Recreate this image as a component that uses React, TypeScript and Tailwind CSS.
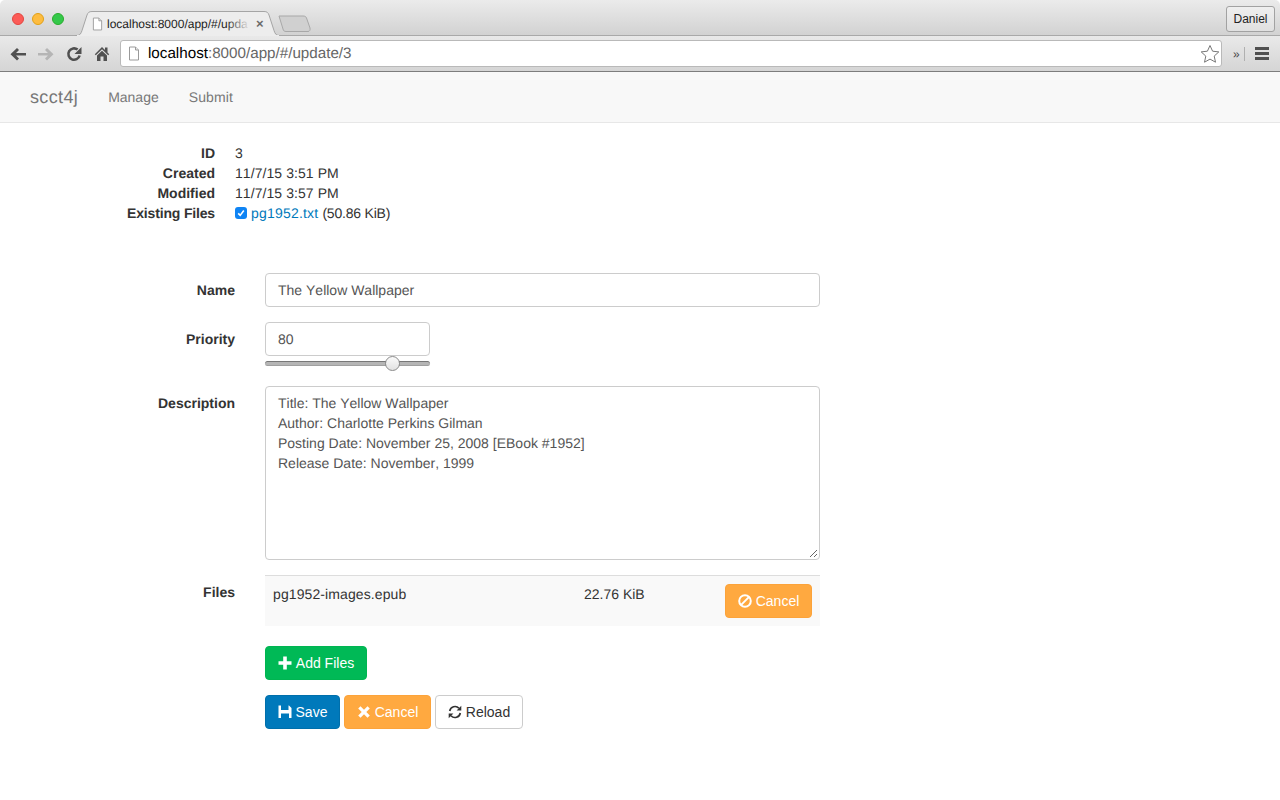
import React from "react";

const FileGlyph = ({ className }: { className: string }) => (
  <svg viewBox="0 0 12 14" className={className} fill="#fff" stroke="#9a9a9a" strokeWidth="1">
    <path d="M1.5.5h6l3 3v10h-9z" />
    <path d="M7.5.5v3h3" fill="#e8e8e8" />
  </svg>
);

const Reload = ({ className }: { className: string }) => (
  <svg viewBox="0 0 16 16" className={className} fill="none" stroke="currentColor">
    <path d="M13.6 9.5A5.7 5.7 0 1 1 11.6 3.6" strokeWidth="2.6" />
    <path d="M15.5 1v7H8.500z" fill="currentColor" stroke="none" />
  </svg>
);

const Home = ({ className }: { className: string }) => (
  <svg viewBox="0 0 16 16" className={className} fill="currentColor">
    <path d="M8 1L.8 8.200l1 1L8 3.200l6.200 6 1-1L13.500 6.500V1.500h-2.500v2.500z" />
    <path d="M8 4.700L3 9.500V15h3.500v-4.500h3V15H13V9.500z" />
  </svg>
);

const Sync = ({ className }: { className: string }) => (
  <svg viewBox="0 0 14 14" className={className} fill="none" stroke="currentColor">
    <path d="M1.700 6A5.400 5.400 0 0 1 11 3.300" strokeWidth="1.700" />
    <path d="M12.300 8A5.400 5.400 0 0 1 3 10.700" strokeWidth="1.700" />
    <path d="M13.300 .8v4.700H8.600z M.7 13.200V8.500h4.700z" fill="currentColor" stroke="none" />
  </svg>
);

const Ban = ({ className }: { className: string }) => (
  <svg viewBox="0 0 14 14" className={className} fill="none" stroke="currentColor" strokeWidth="2">
    <circle cx="7" cy="7" r="5.800" />
    <path d="M2.900 11.100l8.200-8.200" />
  </svg>
);

const Plus = ({ className }: { className: string }) => (
  <svg viewBox="0 0 14 14" className={className} fill="currentColor">
    <path d="M5.200 .5h3.600v4.700h4.700v3.600H8.800v4.700H5.200V8.800H.5V5.200h4.700z" />
  </svg>
);

const Remove = ({ className }: { className: string }) => (
  <svg viewBox="0 0 14 14" className={className} fill="currentColor">
    <path d="M3.500 1.200L7 4.700l3.500-3.500 2.300 2.300-3.500 3.500 3.500 3.500-2.300 2.300L7 9.300l-3.500 3.500-2.300-2.300 3.500-3.500-3.500-3.500z" />
  </svg>
);

const Floppy = ({ className }: { className: string }) => (
  <svg viewBox="0 0 14 14" className={className} fill="currentColor">
    <path d="M.5 .5H3v4.500h7.500V.5h.5l2.500 2.500V13H11V8.500H3V13H.5z" />
  </svg>
);

function BrowserChrome() {
  return (
    <div className="border-b border-[#7d7d7d]">
      <div className="h-9 flex items-end bg-gradient-to-b from-[#ebebeb] to-[#d2d2d2] border-b border-[#a9a9a9] rounded-t-[5px] pl-3 pr-[5px]">
        <div className="flex gap-2 self-start mt-[13px]">
          <span className="w-3 h-3 rounded-full bg-[#fc5b57] border border-[#e2463f]" />
          <span className="w-3 h-3 rounded-full bg-[#fdbc40] border border-[#e1a116]" />
          <span className="w-3 h-3 rounded-full bg-[#34c84a] border border-[#2aac2c]" />
        </div>
        <div className="relative w-[206px] h-[25px] ml-[11px] -mb-px flex items-center pl-[17px] text-[12px] text-[#222]">
          <svg viewBox="0 0 206 25" className="absolute left-0 top-0 w-[206px] h-[25px]">
            <path d="M0 24.500h2c3 0 4-2 5-5L12 4c1-2.500 2-3.500 5-3.500h172c3 0 4 1 5 3.500l5 15.500c1 3 2 5 5 5" fill="#ededed" stroke="#a5a5a5" />
            <path d="M2 24.500h202" stroke="#ededed" />
          </svg>
          <FileGlyph className="relative w-[11px] h-[14px] shrink-0 mr-[4px]" />
          <span className="relative w-[143px] shrink-0 whitespace-nowrap">
            localhost:8000/app/#/upda
            <span className="absolute right-0 top-0 h-full w-[24px] bg-gradient-to-r from-transparent to-[#ededed]" />
          </span>
          <span className="relative ml-[6px] text-[#6a6a6a] text-[13px] leading-none font-bold">×</span>
        </div>
        <svg viewBox="0 0 34 17" className="w-[34px] h-[17px] -ml-[3px] mb-[3px]">
          <path d="M1 1h24c2 0 3 .6 3.500 2l3.500 10c.5 2-.5 3.500-2 3.500H8c-2 0-2.600-1-3-2.500L1 1z" fill="#d0d0d0" stroke="#a8a8a8" />
        </svg>
        <button className="ml-auto self-start mt-[6px] w-[49px] h-[26px] rounded-[3px] border border-[#a2a2a2] bg-gradient-to-b from-[#efefef] to-[#e0e0e0] text-[12px] text-[#222] text-center">
          Daniel
        </button>
      </div>
      <div className="h-[35px] flex items-center bg-gradient-to-b from-[#e9e9e9] to-[#d5d5d5] pl-[10px]">
        <svg viewBox="0 0 16 14" className="w-[16px] h-[14px] text-[#505050]" fill="currentColor">
          <path d="M7 1l2 2-3 3h10v2.500H6l3 3-2 2L.5 7.200z" />
        </svg>
        <svg viewBox="0 0 16 14" className="w-[16px] h-[14px] ml-[12px] text-[#b5b5b5]" fill="currentColor">
          <path d="M9 1L7 3l3 3H0v2.500h10l-3 3 2 2 6.500-6.300z" />
        </svg>
        <Reload className="w-[16px] h-[16px] ml-[12px] text-[#505050]" />
        <Home className="w-[16px] h-[16px] ml-[12px] text-[#505050]" />
        <div className="ml-[10px] w-[1102px] h-[27px] flex items-center rounded-[3px] border border-[#b9b9b9] bg-white pl-[7px] pr-[1px] text-[15.2px] text-[#666]">
          <FileGlyph className="w-[12px] h-[15px] mr-[8px] shrink-0" />
          <span className="text-black">localhost</span>:8000/app/#/update/3
          <svg viewBox="0 0 20 19" className="ml-auto w-[20px] h-[19px]" fill="#fff" stroke="#777">
            <path d="M10 1.500l2.600 5.700 6.200.7-4.600 4.200 1.300 6.100-5.500-3.100-5.500 3.100 1.300-6.100L1.200 7.900l6.200-.7z" />
          </svg>
        </div>
        <span className="ml-[11px] text-[12px] leading-none text-[#444]">»</span>
        <span className="ml-[4px] w-px h-[14px] bg-[#b0b0b0]" />
        <div className="ml-[10px] flex flex-col gap-[2px]">
          <span className="w-[14px] h-[3px] bg-[#505050]" />
          <span className="w-[14px] h-[3px] bg-[#505050]" />
          <span className="w-[14px] h-[3px] bg-[#505050]" />
        </div>
      </div>
    </div>
  );
}

const fieldClass =
  "block w-full rounded border border-[#ccc] bg-white px-3 text-[14px] text-[#555] leading-5";

const btnClass =
  "h-[34px] inline-flex items-center justify-center rounded border text-[14px] font-normal";

function Row({ label, children, className }: { label: string; children: React.ReactNode; className?: string }) {
  return (
    <div className={`flex ${className ?? ""}`}>
      <label className="w-[235px] shrink-0 pt-[7px] text-right font-bold leading-5 text-[#333]">{label}</label>
      <div className="ml-[30px] w-[555px]">{children}</div>
    </div>
  );
}

const details = [
  ["ID", "3"],
  ["Created", "11/7/15 3:51 PM"],
  ["Modified", "11/7/15 3:57 PM"],
];

export default function App() {
  return (
    <div className="h-[800px] overflow-hidden bg-white font-['Liberation_Sans',sans-serif] [font-kerning:none] [text-rendering:geometricPrecision] text-[14px] leading-5 text-[#333]">
      <BrowserChrome />
      <nav className="h-[51px] flex items-center bg-[#f8f8f8] border-b border-[#e7e7e7] pl-[30px] text-[#777]">
        <span className="text-[18px] tracking-[0.35px] mr-[30px]">scct4j</span>
        <span className="mr-[30px]">Manage</span>
        <span className="tracking-[0.1px]">Submit</span>
      </nav>

      <dl className="mt-5">
        {details.map(([k, v]) => (
          <div key={k} className="flex h-5">
            <dt className="w-[215px] text-right font-bold">{k}</dt>
            <dd className="ml-5 tracking-[0.07px]">{v}</dd>
          </div>
        ))}
        <div className="flex h-5">
          <dt className="w-[215px] text-right font-bold tracking-[-0.16px]">Existing Files</dt>
          <dd className="ml-5 flex items-center">
            <span className="w-3 h-3 rounded-[3px] bg-[#0f84f4] flex items-center justify-center mr-1">
              <svg viewBox="0 0 10 10" className="w-2 h-2" fill="none" stroke="#fff" strokeWidth="2">
                <path d="M1.500 5.500l2.500 2.500 4.500-6" />
              </svg>
            </span>
            <a className="text-[#0079bb] tracking-[0.2px]">pg1952.txt</a>
            <span className="ml-1 tracking-[-0.2px]">(50.86 KiB)</span>
          </dd>
        </div>
      </dl>

      <form className="mt-[50px]">
        <Row label="Name">
          <div className={`${fieldClass} h-[34px] py-[6px]`}>The Yellow Wallpaper</div>
        </Row>
        <Row label="Priority" className="mt-[15px]">
          <div className={`${fieldClass} h-[34px] py-[6px] !w-[165px]`}>80</div>
          <div className="relative mt-[5px] w-[165px] h-[5px] rounded-full bg-[#b5b5b5] border-t border-b border-t-[#777] border-b-[#a0a0a0]">
            <span className="absolute left-[120px] -top-[6px] w-[15px] h-[15px] rounded-full border border-[#8a8a8a] bg-gradient-to-b from-[#fafafa] to-[#e2e2e2]" />
          </div>
        </Row>
        <Row label="Description" className="mt-[20px]">
          <div className={`${fieldClass} relative h-[174px] py-[6px]`}>
            <div>Title: The Yellow Wallpaper</div>
            <div>Author: Charlotte Perkins Gilman</div>
            <div>Posting Date: November 25, 2008 [EBook #1952]</div>
            <div>Release Date: November, 1999</div>
            <svg viewBox="0 0 9 9" className="absolute right-[1px] bottom-[1px] w-[9px] h-[9px]" stroke="#666" fill="none">
              <path d="M1 8l7-7M5 8l3-3" />
            </svg>
          </div>
        </Row>
        <div className="flex mt-[15px]">
          <label className="w-[235px] shrink-0 pt-[7px] text-right font-bold">Files</label>
          <div className="ml-[30px] w-[555px] h-[51px] bg-[#f9f9f9] border-t border-[#ddd] flex pt-[8px] pl-2 pr-2">
            <span className="w-[311px] tracking-[0.1px]">pg1952-images.epub</span>
            <span>22.76 KiB</span>
            <button type="button" className={`${btnClass} ml-auto w-[87px] bg-[#ffa940] border-[#fca33a] text-white`}>
              <Ban className="w-[14px] h-[14px] mr-1" />
              Cancel
            </button>
          </div>
        </div>
        <div className="ml-[265px] mt-5">
          <button type="button" className={`${btnClass} w-[102px] bg-[#00b956] border-[#00b551] text-white`}>
            <Plus className="w-[14px] h-[14px] mr-1" />
            Add Files
          </button>
        </div>
        <div className="ml-[265px] mt-[15px] flex gap-1">
          <button type="button" className={`${btnClass} w-[75px] bg-[#0079bb] border-[#006fab] text-white`}>
            <Floppy className="w-[14px] h-[14px] mr-1" />
            Save
          </button>
          <button type="button" className={`${btnClass} w-[87px] bg-[#ffa940] border-[#fca33a] text-white`}>
            <Remove className="w-[14px] h-[14px] mr-1" />
            Cancel
          </button>
          <button type="button" className={`${btnClass} w-[88px] bg-white border-[#ccc] text-[#333]`}>
            <Sync className="w-[14px] h-[14px] mr-1" />
            Reload
          </button>
        </div>
      </form>
    </div>
  );
}
